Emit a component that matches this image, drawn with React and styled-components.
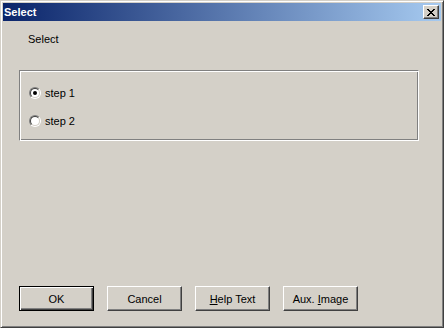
import React, { useState } from "react";
import styled, { createGlobalStyle } from "styled-components";

const GlobalStyle = createGlobalStyle`
  html, body {
    margin: 0;
    padding: 0;
    background: #d4d0c8;
  }
  * {
    box-sizing: border-box;
  }
`;

const Window = styled.div`
  width: 444px;
  height: 328px;
  display: flex;
  flex-direction: column;
  background: #d4d0c8;
  border: 1px solid;
  border-color: #d4d0c8 #404040 #404040 #d4d0c8;
  box-shadow: inset 1px 1px #ffffff, inset -1px -1px #808080;
  padding: 2px;
  font-family: "Liberation Sans", Arial, sans-serif;
  font-size: 11px;
  color: #000;
`;

const TitleBar = styled.div`
  height: 18px;
  flex: none;
  display: flex;
  align-items: center;
  padding: 0 2px 0 1px;
  background: linear-gradient(to right, #0a246a, #a6caf0);
`;

const Title = styled.span`
  flex: 1;
  color: #fff;
  font-weight: bold;
  font-size: 11px;
  line-height: 18px;
`;

const CloseButton = styled.button`
  width: 16px;
  height: 14px;
  padding: 0;
  display: flex;
  align-items: center;
  justify-content: center;
  background: #d4d0c8;
  border: 1px solid;
  border-color: #ffffff #404040 #404040 #ffffff;
  box-shadow: inset -1px -1px #808080;
  cursor: default;
`;

const Body = styled.div`
  flex: 1;
  display: flex;
  flex-direction: column;
  padding: 0 22px 14px 16px;
`;

const Label = styled.div`
  margin-top: 12px;
  padding-left: 9px;
  line-height: 13px;
`;

const Group = styled.div`
  margin-top: 24px;
  height: 71px;
  border: 1px solid;
  border-color: #808080 #ffffff #ffffff #808080;
  box-shadow: inset 1px 1px #ffffff, inset -1px -1px #808080;
  padding: 14px 8px 0 9px;
  display: flex;
  flex-direction: column;
  gap: 12px;
`;

const RadioRow = styled.label`
  height: 16px;
  display: flex;
  align-items: center;
  gap: 4px;
  cursor: default;
`;

const RadioOuter = styled.span`
  width: 12px;
  height: 12px;
  border-radius: 50%;
  border: 1px solid;
  border-color: #808080 #ffffff #ffffff #808080;
  display: flex;
`;

const RadioInner = styled.span`
  flex: 1;
  border-radius: 50%;
  border: 1px solid;
  border-color: #404040 #d4d0c8 #d4d0c8 #404040;
  background: #fff;
  display: flex;
  align-items: center;
  justify-content: center;
`;

const Dot = styled.span`
  width: 4px;
  height: 4px;
  border-radius: 50%;
  background: ${({ on }) => (on ? "#000" : "transparent")};
`;

const ButtonRow = styled.div`
  margin-top: auto;
  display: flex;
  gap: 13px;
`;

const Button = styled.button`
  width: 75px;
  height: 25px;
  padding: 0;
  font-family: "Liberation Sans", Arial, sans-serif;
  font-size: 11px;
  color: #000;
  background: #d4d0c8;
  border: 1px solid;
  border-color: ${({ primary }) =>
    primary ? "#000" : "#ffffff #404040 #404040 #ffffff"};
  box-shadow: ${({ primary }) =>
    primary
      ? "inset 1px 1px #ffffff, inset -1px -1px #404040, inset -2px -2px #808080"
      : "inset -1px -1px #808080"};
  cursor: default;

  u {
    text-decoration: underline;
    text-underline-offset: 1px;
  }
`;

const radios = ["step 1", "step 2"];

export default function App() {
  const [picked, setPicked] = useState(0);

  return (
    <>
      <GlobalStyle />
      <Window>
        <TitleBar>
          <Title>Select</Title>
          <CloseButton>
            <svg width="8" height="7" viewBox="0 0 8 7">
              <path
                d="M0 0h2v1h1v1h2V1h1V0h2v1H7v1H6v1H5v1h1v1h1v1h1v1H6V6H5V5H3v1H2v1H0V6h1V5h1V4h1V3H2V2H1V1H0z"
                fill="#000"
              />
            </svg>
          </CloseButton>
        </TitleBar>
        <Body>
          <Label>Select</Label>
          <Group>
            {radios.map((r, i) => (
              <RadioRow key={r} onClick={() => setPicked(i)}>
                <RadioOuter>
                  <RadioInner>
                    <Dot on={picked === i} />
                  </RadioInner>
                </RadioOuter>
                {r}
              </RadioRow>
            ))}
          </Group>
          <ButtonRow>
            <Button primary>OK</Button>
            <Button>Cancel</Button>
            <Button>
              <u>H</u>elp Text
            </Button>
            <Button>
              Aux. <u>I</u>mage
            </Button>
          </ButtonRow>
        </Body>
      </Window>
    </>
  );
}
